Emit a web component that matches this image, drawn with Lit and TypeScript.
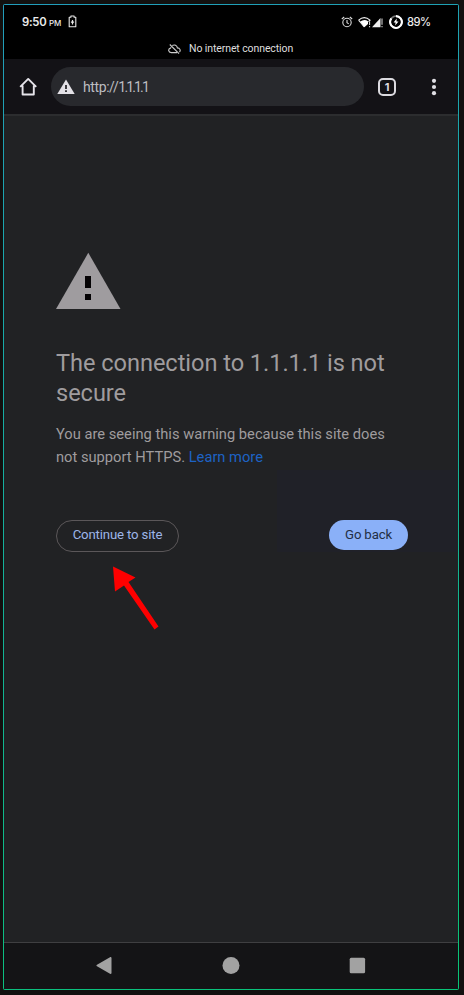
import { LitElement, html, css } from "lit";
import { customElement } from "lit/decorators.js";

@customElement("status-bar")
class StatusBar extends LitElement {
  static styles = css`
    :host { display: block; background: #000; color: #ececec; height: 54px; }
    .row { display: flex; align-items: center; height: 33px; padding: 0 27px 0 18px; font: 600 11.3px/16px Inter, sans-serif; }
    .time { width: 24px; white-space: nowrap; letter-spacing: -0.25px; }
    .pm { font-size: 8px; font-weight: 500; width: 12px; margin: 2px 0 0 3px; white-space: nowrap; letter-spacing: -0.1px; }
    .bat { margin-left: 7px; }
    .gap { flex: 1; }
    .wifi { margin-left: 5px; }
    .ring { margin-left: 6px; }
    .pct { margin-left: 4px; width: 24px; white-space: nowrap; font: 500 11.2px/16px Inter, sans-serif; letter-spacing: -0.5px; }
    .notice { display: flex; align-items: center; height: 21px; padding-left: 164px; font: 400 10.5px/14px Roboto, sans-serif; letter-spacing: -0.1px; color: #dedede; }
    .msg { margin-left: 8px; white-space: nowrap; }
    svg { display: block; flex: none; }
  `;
  render() {
    return html`
      <div class="row">
        <span class="time">9:50</span><span class="pm">PM</span>
        <svg class="bat" width="9" height="13" viewBox="0 0 9 13">
          <path d="M1.2 2.3h1.7V1h3.2v1.3h1.7v9.500H1.200z" fill="none" stroke="#e8e8e8" stroke-width="1.1" stroke-linejoin="round" />
          <path d="M4.500 5v4.400M2.900 7.200h3.200" stroke="#e8e8e8" stroke-width="1.200" />
        </svg>
        <span class="gap"></span>
        <svg width="12" height="12" viewBox="0 0 12 12" fill="none" stroke="#dcdcdc" stroke-width="1.1">
          <circle cx="6" cy="6.500" r="4.200" /><path d="M.8 3 3.200 1M11.200 3 8.800 1M6 4v2.800l1.800 1.100" />
        </svg>
        <svg class="wifi" width="25" height="12" viewBox="0 0 25 12">
          <path d="M.6 4.200Q6.300 -.9 12 4.200L10.500 5.600M.6 4.200 6.300 11" fill="none" stroke="#eee" stroke-width="1.100" />
          <path d="M2.200 5.500Q6.300 2.600 10 5.200V8L6.300 11.300z" fill="#fff" />
          <path d="M11.600 5.500v3.500M11.600 10v1.300M24 2.500v6.300M24 10v1.300" stroke="#ddd" stroke-width="1" />
          <path d="M14 11.300 22.500 2v9.300z" fill="#eee" />
        </svg>
        <svg class="ring" width="14" height="14" viewBox="0 0 14 14">
          <circle cx="7" cy="7" r="5.900" fill="none" stroke="#777" stroke-width="1.800" />
          <path d="M7 1.100A5.900 5.900 0 1 1 2.400 3.300" fill="none" stroke="#fff" stroke-width="2.100" />
          <path d="M7.700 3.400 4.600 7.500h2L6.200 10.600 9.500 6.400h-2z" fill="#fff" />
        </svg>
        <span class="pct">89%</span>
      </div>
      <div class="notice">
        <svg width="13" height="10" viewBox="0 0 13 10" fill="none" stroke="#ccc" stroke-width="1.1">
          <path d="M4.300 1.500C6.500 .2 9 1.400 9.400 3.900 11.900 3.900 13 6.500 11.400 8M9 8.600H3.200C.3 8.600-.3 4.900 2.500 4.100L3.200 3.300M1.800 .5 11 9.600" />
        </svg>
        <span class="msg">No internet connection</span>
      </div>
    `;
  }
}

@customElement("browser-bar")
class BrowserBar extends LitElement {
  static styles = css`
    :host { display: flex; align-items: center; box-sizing: border-box; height: 57px; padding: 0 20px 0 15px; background: #131216; border-bottom: 2px solid #2c2d2f; }
    svg { display: block; flex: none; }
    .pill { display: flex; align-items: center; box-sizing: border-box; width: 313px; height: 39px; border-radius: 20px; margin-left: 13px; padding-left: 6px; background: #28292d; }
    .url { margin: 0 0 0 8px; font: 400 14px/18px Roboto, sans-serif; letter-spacing: -0.4px; color: #bdbdc1; white-space: nowrap; }
    .host { letter-spacing: -1.85px; }
    .tabs { display: flex; align-items: center; justify-content: center; box-sizing: border-box; width: 18px; height: 18px; margin-left: 14px; border: 2px solid #dcdbe0; border-radius: 5px; font: 700 11px/14px Inter, sans-serif; color: #dcdbe0; }
    .dots { margin-left: 35px; }
  `;
  render() {
    return html`
      <svg width="19" height="19" viewBox="0 0 19 19"><path d="M1.200 9.900 9.200 1.900 17.200 9.900M3.600 8.500v9h11.200v-9" fill="none" stroke="#e6e4ea" stroke-width="1.900" stroke-linejoin="round" /></svg>
      <div class="pill">
        <svg width="18" height="16" viewBox="0 0 18 16"><path d="M9 .4 17.700 15H.3z" fill="#e3e1e6" /><path d="M9 6v4M9 11.200v1.900" stroke="#28292d" stroke-width="1.800" /></svg>
        <span class="url">http://<span class="host">1.1.1.1</span></span>
      </div>
      <span class="tabs">1</span>
      <svg class="dots" width="6" height="18" viewBox="0 0 6 18" fill="#e0dfe4"><circle cx="3" cy="2.800" r="2.100" /><circle cx="3" cy="9" r="2.100" /><circle cx="3" cy="15.200" r="2.100" /></svg>
    `;
  }
}

@customElement("warning-page")
class WarningPage extends LitElement {
  static styles = css`
    :host { display: block; position: relative; box-sizing: border-box; padding: 136px 50px 0 52px; background: #212224; font-family: Roboto, sans-serif; color: #9f9c9e; }
    svg { display: block; }
    h1 { margin: 39px 0 0; font: 400 23.6px/30px Roboto, sans-serif; letter-spacing: -0.05px; white-space: nowrap; }
    p { margin: 15px 0 0; font-size: 14.7px; line-height: 23px; white-space: nowrap; }
    .link { color: #1d62c5; }
    .actions { position: relative; display: flex; justify-content: space-between; align-items: flex-start; margin-top: 51px; }
    .btn { box-sizing: border-box; border-radius: 16px; font-size: 13.2px; letter-spacing: -0.15px; text-align: center; white-space: nowrap; }
    .outline { width: 123px; height: 32px; border: 1px solid #5b5759; color: #9db5e8; line-height: 28px; }
    .fill { width: 79px; height: 30px; background: #8ab0f8; color: #222e45; line-height: 29px; }
    .tint { position: absolute; left: 273px; top: 354px; width: 180px; height: 82px; background: #202128; }
    .arrow { position: absolute; left: 106px; top: 449px; }
  `;
  render() {
    return html`
      <div class="tint"></div>
      <svg width="65" height="57" viewBox="0 0 65 57"><path d="M32.300 .8 64.500 57H0z" fill="#9f9c9f" /><path d="M29 24h6v12h-6zM29 42h6v6h-6z" fill="#050305" /></svg>
      <h1>The connection to 1.1.1.1 is not<br />secure</h1>
      <p>You are seeing this warning because this site does<br />not support HTTPS. <span class="link">Learn more</span></p>
      <div class="actions">
        <div class="btn outline">Continue to site</div>
        <div class="btn fill">Go back</div>
      </div>
      <svg class="arrow" width="52" height="66" viewBox="0 0 52 66"><path d="M3 1.500 25.500 12.500 18.500 17 48.500 61.500 44.500 64.500 14 20.500 5 26.500z" fill="#fe0000" /></svg>
    `;
  }
}

@customElement("nav-bar")
class NavBar extends LitElement {
  static styles = css`
    :host { display: flex; align-items: center; justify-content: space-between; box-sizing: border-box; height: 47px; padding: 0 92px; border-top: 1px solid #3f3f41; background: #141416; }
    svg { display: block; }
  `;
  render() {
    return html`
      <svg width="17" height="18" viewBox="0 0 17 18"><path d="M1.500 8.500 14.500 1V16z" fill="#a2a2a2" stroke="#a2a2a2" stroke-width="2" stroke-linejoin="round" /></svg>
      <svg width="18" height="18" viewBox="0 0 18 18"><circle cx="9" cy="8.500" r="8.500" fill="#a2a2a2" /></svg>
      <svg width="17" height="18" viewBox="0 0 17 18"><rect x=".7" y=".8" width="15.400" height="15.400" rx="1.500" fill="#a2a2a2" /></svg>
    `;
  }
}

@customElement("app-root")
class AppRoot extends LitElement {
  static styles = css`
    :host { display: block; box-sizing: border-box; width: 464px; height: 995px; padding: 4px 5px 5px 3px; background: #12100f; overflow: hidden; }
    .frame { box-sizing: border-box; width: 456px; height: 986px; padding: 1px; border-radius: 2px; background: linear-gradient(165deg, #229dbb 0%, #18aaa8 30%, #10b78c 70%, #08c477 100%); }
    .screen { display: flex; flex-direction: column; height: 984px; background: #212224; }
    .page { flex: 1; }
  `;
  render() {
    return html`
      <div class="frame"><div class="screen">
        <status-bar></status-bar>
        <browser-bar></browser-bar>
        <warning-page class="page"></warning-page>
        <nav-bar></nav-bar>
      </div></div>
    `;
  }
}
